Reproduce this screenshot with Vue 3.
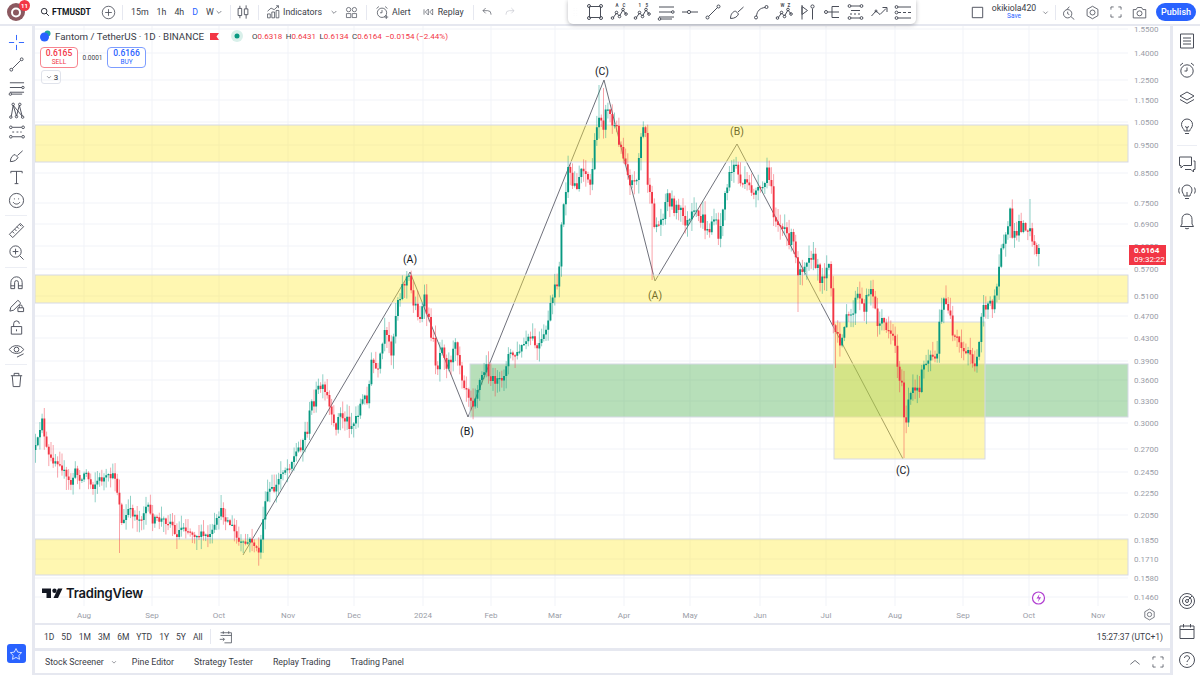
<script setup>
import { h } from 'vue'

const c = (x, y, r) => `M${x - r} ${y}a${r} ${r} 0 1 0 ${2 * r} 0a${r} ${r} 0 1 0 ${-2 * r} 0`
const wave = 'M3 15l3.5-5 3 3 3.5-6 3 4' + c(2.5, 15, 1.3) + c(6.5, 9.5, 1.3) + c(9.5, 13.5, 1.3) + c(13, 6.5, 1.3) + c(16, 11, 1.3)

const I = {
  search: c(7.5, 7.5, 5) + 'M11 11l5 5',
  plus: c(9, 9, 7.5) + 'M9 5v8M5 9h8',
  chev: 'M5.5 7.5L9 11l3.5-3.5',
  candles: 'M5.5 2v3M5.5 13v3M3.5 5h4v8h-4zM12.5 1.5v4M12.5 12v4.5M10.5 5.5h4v6.5h-4z',
  indicators: 'M2 16.5v-5h3.5v5zM7.5 16.5V9H11v7.5zM13 16.5V7h3.5v9.5zM2 8l4.5-4 4 2 5.5-5M13 1h3v3',
  templates: c(5, 5, 3) + c(13, 5, 3) + 'M2 10.5h6v5.5H2zM10 10.5h6v5.5h-6z',
  alert: c(9, 10, 6) + 'M9 6.5V10H6.5M2 4.5L5 2M16 4.5L13 2M12 15.5h5M14.5 13v5',
  replay: 'M8 4.5L3.5 9 8 13.5zM14.5 4.5L10 9l4.5 4.5zM1.5 5v8',
  undo: 'M7 3L3 7l4 4M3 7h7a5 5 0 0 1 5 5v1',
  redo: 'M11 3l4 4-4 4M15 7H8a5 5 0 0 0-5 5v1',
  rect: 'M3.5 3.5h11v11h-11z' + c(3, 3, 1.5) + c(15, 3, 1.5) + c(3, 15, 1.5) + c(15, 15, 1.5),
  wave,
  lines: 'M2 4h15M2 9h13M2 14h15' + c(15.8, 9, 1.3) + c(2.5, 16, 1.3) + 'M4 16h11',
  hline: 'M1 9h5M10 9h7' + c(8, 9, 1.6),
  trend: 'M4.5 13.5l9-9' + c(3.5, 14.5, 1.5) + c(14.5, 3.5, 1.5),
  brush: 'M2.5 15.5c0-4.5 2.5-7 5-7.5l3 3c-1 2.5-3.5 4.5-8 4.5zM10 9l5.5-5',
  curve: 'M4.5 13C5 8 8 5 13 4.5' + c(4, 14.5, 1.5) + c(14.5, 4, 1.5),
  flagpin: 'M3 2v14.5M3 3.5l5.5 4L3 11.5zM13.5 5.5v11' + c(13.5, 3.5, 1.6),
  fork: 'M4.5 9H9M9 3.5v11M9 3.5h7M9 9h7M9 14.5h7' + c(3, 9, 1.5),
  rows: 'M5 3h9M5 15h9M5 7.5h9M4 11h2M8 11h2M12 11h2' + c(3.5, 3, 1.4) + c(15.5, 3, 1.4) + c(3.5, 15, 1.4) + c(15.5, 15, 1.4),
  zig: 'M1.5 13l4.5-5 4 3.5 6-6M12.5 4.5H17V9' + c(6, 8, 1) ,
  rows2: 'M4 4h13M4 15h13M4 9.5h3M9 9.5h3M14 9.5h3' + c(2.5, 4, 1.4) + c(2.5, 9.5, 1.4) + c(2.5, 15, 1.4),
  drag: 'M6 3.5v.1M6 7v.1M6 10.5v.1M6 14v.1M10 3.5v.1M10 7v.1M10 10.5v.1M10 14v.1',
  box: 'M3.5 3.5h11v11h-11z',
  aSearch: c(8, 10.5, 5) + 'M12 14l4 3.5M7 5.5L10 2M8 8v2.5l2 1',
  hex: 'M9 1.5l6.5 3.7v7.6L9 16.5l-6.5-3.7V5.2z' + c(9, 9, 3),
  full: 'M2.5 6V2.5H6M12 2.5h3.5V6M15.5 12v3.5H12M6 15.5H2.5V12',
  camera: 'M1.5 5.5h3.5L6.5 3h5L13 5.5h3.5v10h-15z' + c(9, 10, 3),
  cross: 'M9 1v5.5M9 11.5V17M1 9h5.5M11.5 9H17',
  xabcd: 'M3.5 15L5.5 3.5 9 15l3-11.5 3 11.5L5.5 3.5' + c(3, 16, 1.3) + c(5.5, 2.5, 1.3) + c(9, 15.5, 1.3) + c(12.5, 2.5, 1.3) + c(15.5, 16, 1.3),
  para: 'M4.5 3.5h10M4.5 8.5h2M9 8.5h2M13 8.5h1.5M4.5 13.5h10' + c(3, 3.5, 1.4) + c(16, 3.5, 1.4) + c(3, 13.5, 1.4) + c(16, 13.5, 1.4),
  text: 'M3 4.5V2.5h12v2M9 2.5v13M7 15.5h4',
  smile: c(9, 9, 7.5) + 'M5.5 10.8c1.5 2.6 5.5 2.6 7 0M6.8 6.8v1M11.2 6.8v1',
  ruler: 'M1.5 13L13 1.5 16.5 5 5 16.5zM4.5 10l2 2M7 7.5l2 2M9.5 5l2 2M12 2.5l2 2',
  zoom: c(8, 8, 6) + 'M12.5 12.5L16.5 16.5M5 8h6M8 5v6',
  magnet: 'M3 9a6 6 0 0 1 12 0v6.5h-4V9a2 2 0 0 0-4 0v6.5H3zM3 12.5h4M11 12.5h4',
  plock: 'M2 16l1-4 7.5-7.5 3 3L6 15zM10.5 12.5h6v4h-6zM12 12.5V11a1.5 1.5 0 0 1 3 0v1.5',
  lock: 'M3.5 8h11v8h-11zM6 8V5a3 3 0 0 1 6 0M9 11v2',
  eye: 'M1.5 8c3-5.5 12-5.5 15 0-3 5.5-12 5.5-15 0z' + c(9, 8, 2.5) + 'M9.5 16l7-3.5',
  trash: 'M3 5h12M6.5 5V2.5h5V5M4.5 5l1 11.5h7l1-11.5',
  list: 'M2.5 2h13v14h-13zM5 6h8M5 9h8M5 12h8',
  alarm: c(9, 10, 6.2) + 'M9 6.5V10H6.5M2 4.5L5 2M16 4.5L13 2',
  layers: 'M9 3l7 4-7 4-7-4zM2 10.5l7 4 7-4',
  bulb: 'M6.3 13c0-2-2.8-3-2.8-6.5a5.5 5.5 0 0 1 11 0c0 3.5-2.8 4.5-2.8 6.5zM7 15.5h4M9 9v4M7 8.5l2 1 2-1',
  chat: 'M1.5 2h12v8.5H5.5L3 13v-2.5H1.5zM15.5 6h1.5v8.5h-1.5V17L13 14.5H7',
  signal: 'M6 13c0-2-2-3-2-6a5 5 0 0 1 10 0c0 3-2 4-2 6zM7 15.5h4M9 9v4M1.5 4.5c-1 2-1 4 0 6M16.5 4.5c1 2 1 4 0 6',
  bell: 'M9 2c3.5 0 5 2.5 5 5.5V12l1.5 2.5h-13L4 12V7.5C4 4.5 5.5 2 9 2zM7 16c.5 1 3.5 1 4 0',
  radar: c(9, 9, 7.5) + c(9, 9, 4.5) + c(9, 9, 1.5) + 'M10 8l4-4',
  cal: 'M2 4h14v12.5H2zM2 7.5h14M5.5 2v3.5M12.5 2v3.5',
  ques: c(9, 9, 7.5) + 'M6.5 7c0-3 5-3 5 0 0 2-2.5 2-2.5 4M9 13v1',
  star: 'M9 2l2.2 4.6 5 .7-3.6 3.5.9 5L9 13.4l-4.5 2.4.9-5-3.6-3.5 5-.7z',
  range: 'M2 3.5h14v13H7M2 7h14M5.5 1.5v3.5M12.5 1.5v3.5M1 12h6M5 10l2 2-2 2',
  up: 'M3 12l6-5 6 5',
}

const Ico = (p) =>
  h('svg', { class: 'ic', viewBox: '0 0 18 18', width: p.s || 14, height: p.s || 14, fill: 'none', stroke: p.col || '#4a4e59', 'stroke-width': p.w || 1 }, [
    h('path', { d: I[p.n] }),
    p.a ? h('text', { x: 5.5, y: 4, 'font-size': 4.5, fill: '#4a4e59', stroke: 'none', 'font-family': 'Roboto, sans-serif', 'font-weight': 700 }, p.a) : null,
    p.b ? h('text', { x: 12.5, y: 4, 'font-size': 4.5, fill: '#4a4e59', stroke: 'none', 'font-family': 'Roboto, sans-serif', 'font-weight': 700 }, p.b) : null,
  ])
Ico.props = ['n', 's', 'col', 'w', 'a', 'b']

const floatIcons = [
  { n: 'rect' }, { n: 'wave', a: 'A', b: 'C' }, { n: 'wave', a: '1', b: '5' }, { n: 'lines' }, { n: 'hline' }, { n: 'trend' },
  { n: 'brush' }, { n: 'curve' }, { n: 'wave', a: 'W', b: 'Z' }, { n: 'flagpin' }, { n: 'fork' }, { n: 'rows' }, { n: 'zig' }, { n: 'rows2' },
]
const leftGroups = [
  ['trend', 'lines', 'xabcd', 'para', 'brush', 'text', 'smile'],
  ['ruler', 'zoom'],
  ['magnet', 'plock', 'lock', 'eye'],
  ['trash'],
]
const rightTop = ['list', 'alarm', 'layers', 'bulb']
const rightMid = ['chat', 'signal', 'bell']
const rightBot = ['radar', 'cal', 'ques']
const tf = ['15m', '1h', '4h']
const rangeBtns = ['1D', '5D', '1M', '3M', '6M', 'YTD', '1Y', '5Y', 'All']
const panels = ['Pine Editor', 'Strategy Tester', 'Replay Trading', 'Trading Panel']

const prices = [
  ['1.5500', 29], ['1.4000', 53], ['1.2500', 80], ['1.1500', 100], ['1.0500', 122], ['0.9500', 145], ['0.8500', 173], ['0.7500', 203],
  ['0.6900', 224], ['0.6300', 246], ['0.5700', 269], ['0.5100', 296], ['0.4700', 316], ['0.4300', 338], ['0.3900', 361], ['0.3600', 380],
  ['0.3300', 401], ['0.3000', 423], ['0.2700', 449], ['0.2450', 472], ['0.2250', 493], ['0.2050', 515], ['0.1850', 540], ['0.1710', 559],
  ['0.1580', 578], ['0.1460', 597],
]
const times = [['Aug', 84], ['Sep', 152], ['Oct', 219], ['Nov', 288], ['Dec', 354], ['2024', 423], ['Feb', 491], ['Mar', 555], ['Apr', 624], ['May', 690], ['Jun', 760], ['Jul', 826], ['Aug', 895], ['Sep', 963], ['Oct', 1029], ['Nov', 1098]]
const labels = [['(A)', 410, 259], ['(B)', 467, 431], ['(C)', 602, 71], ['(A)', 655, 295], ['(B)', 737, 131], ['(C)', 903, 470]]
const bands = [[125, 162], [275, 303], [539, 575]]

const KP = [35,450,38,440,42,415,45,445,50,460,55,460,60,462,67,480,72,485,74,470,82,480,85,470,92,487,98,480,107,478,115,476,117,490,120,505,122,527,128,510,135,515,140,520,147,505,152,520,163,520,172,522,175,537,183,525,190,532,198,535,210,537,215,527,220,510,227,520,233,528,238,542,243,545,252,540,257,552,260,550,263,518,268,490,275,490,282,470,288,468,295,455,300,445,307,430,312,403,320,387,328,400,333,430,340,415,353,425,360,405,368,395,372,360,378,375,384,335,392,350,397,300,403,285,408,275,413,300,420,317,425,300,428,320,432,335,437,370,442,340,447,365,457,345,462,375,470,395,473,400,478,385,487,365,490,380,495,380,502,383,508,355,517,355,523,345,532,337,537,350,545,335,550,310,558,280,562,220,568,173,573,187,577,183,583,163,590,187,597,127,600,107,603,125,608,105,612,125,617,130,622,150,627,165,630,180,635,185,638,165,642,127,646,135,648,190,652,210,655,225,660,225,667,195,673,205,682,215,688,225,693,215,703,220,708,235,713,215,720,240,723,200,730,175,735,160,738,175,743,185,753,190,760,195,767,175,772,185,773,210,778,222,785,235,793,240,797,270,803,265,810,250,817,270,823,282,826,262,830,265,833,330,840,345,843,325,850,318,858,295,863,312,870,282,875,310,878,322,887,325,893,335,898,365,902,390,905,430,908,405,913,390,918,395,922,370,927,355,937,355,940,320,945,295,950,315,953,345,958,340,963,355,970,350,975,372,978,350,982,305,988,305,993,310,998,270,1002,238,1007,240,1010,215,1013,240,1020,225,1025,225,1030,225,1035,250,1038,247]
const spikes = { 120: 553, 797: 312, 835: 368, 904: 458, 653: 280, 1030: 199, 44: 408, 599: 85, 604: 88 }

function buildCandles() {
  let seed = 12345
  const rnd = () => (seed = (seed * 16807) % 2147483647) / 2147483647
  const interp = (x) => {
    for (let i = 0; i < KP.length - 2; i += 2) {
      if (x <= KP[i + 2]) return KP[i + 1] + ((x - KP[i]) / (KP[i + 2] - KP[i])) * (KP[i + 3] - KP[i + 1])
    }
    return KP[KP.length - 1]
  }
  const out = { gw: '', rw: '', gb: '', rb: '' }
  let prev = interp(35)
  for (let x = 35.5; x <= 1039; x += 2.21) {
    const close = interp(x) + (rnd() - 0.5) * (x > 550 || (x > 300 && x < 480) ? 15 : 8)
    const open = prev
    const top = Math.min(open, close)
    const bot = Math.max(open, close)
    let hi = top - rnd() * 13 - 0.5
    let lo = bot + rnd() * 13 + 0.5
    for (const k in spikes) {
      if (Math.abs(x - k) < 1.2) {
        if (spikes[k] > bot) lo = spikes[k]
        else hi = spikes[k]
      }
    }
    const up = close < open
    const X = x.toFixed(1)
    const w = `M${X} ${hi.toFixed(1)}V${lo.toFixed(1)}`
    const H = Math.max(bot - top, 1.2)
    const b = `M${(x - 0.95).toFixed(1)} ${top.toFixed(1)}h1.9v${H.toFixed(1)}h-1.9z`
    if (up) { out.gw += w; out.gb += b } else { out.rw += w; out.rb += b }
    prev = close
  }
  return out
}
const candles = buildCandles()
const waveLine = '243,555 410,272 468,417 604,80 655,281 737,144 903,459'
</script>

<template>
  <div class="app">
    <header class="top">
      <div class="avatar">
        <svg width="18" height="18" viewBox="0 0 18 18"><circle cx="9" cy="9" r="9" fill="#8b5960" /><circle cx="9" cy="9.500" r="4" fill="none" stroke="#fff" stroke-width="2" /></svg>
        <span class="badge">11</span>
      </div>
      <Ico n="search" :s="10" class="m-search" :w="1.6" col="#131722" />
      <b class="sym">FTMUSDT</b>
      <Ico n="plus" :s="15" class="m-plus" />
      <i class="vs v1"></i>
      <div class="tfs">
        <span v-for="t in tf" :key="t">{{ t }}</span>
        <span class="blue">D</span>
        <span>W</span>
      </div>
      <Ico n="chev" :s="12" class="m-chev" />
      <i class="vs v2"></i>
      <Ico n="candles" :s="16" class="m-cand" />
      <i class="vs v3"></i>
      <Ico n="indicators" :s="14" class="m-ind" />
      <span class="lbl">Indicators</span>
      <Ico n="chev" :s="12" class="m-chev2" />
      <Ico n="templates" :s="13" class="m-tpl" />
      <i class="vs v4"></i>
      <Ico n="alert" :s="14" class="m-alert" />
      <span class="lbl">Alert</span>
      <Ico n="replay" :s="12" class="m-replay" />
      <span class="lbl">Replay</span>
      <i class="vs v5"></i>
      <Ico n="undo" :s="12" class="m-undo" />
      <Ico n="redo" :s="12" class="m-redo" col="#c4c6ce" />

      <div class="float">
        <Ico n="drag" :s="12" class="drag" col="#b2b5be" :w="1.4" />
        <span v-for="(f, i) in floatIcons" :key="i" class="fi"><Ico :n="f.n" :a="f.a" :b="f.b" :s="18" /></span>
      </div>

      <div class="topright">
        <Ico n="box" :s="17" />
        <div class="user"><span>okikiola420</span><small>Save</small></div>
        <Ico n="chev" :s="11" />
        <i class="vs v6"></i>
        <Ico n="aSearch" :s="15" class="m-a" />
        <Ico n="hex" :s="15" class="m-b" />
        <Ico n="full" :s="14" class="m-b" />
        <Ico n="camera" :s="15" class="m-b" />
        <button class="publish">Publish</button>
      </div>
    </header>

    <div class="main">
      <aside class="left">
        <span class="li"><Ico n="cross" :s="17" col="#2962ff" /></span>
        <template v-for="(g, gi) in leftGroups" :key="gi">
          <span v-for="n in g" :key="n" class="li"><Ico :n="n" :s="17" /></span>
          <i v-if="gi < 3" class="hs"></i>
        </template>
        <button class="star"><Ico n="star" :s="14" col="#fff" /></button>
      </aside>

      <section class="center">
        <div class="chart">
          <svg class="canvas" viewBox="35 26 1135 597" width="1135" height="597">
            <g stroke="#f1f3f8" stroke-width="1">
              <path v-for="p in prices" :key="p[0]" :d="`M35 ${p[1]}H1128`" />
              <path v-for="t in times" :key="t[0] + t[1]" :d="`M${t[1]} 26V606`" />
            </g>
            <polyline :points="waveLine" fill="none" stroke="#5d606b" stroke-width="0.9" />
            <text v-for="(l, i) in labels" :key="i" :x="l[1]" :y="l[2] + 4" class="wlabel">{{ l[0] }}</text>

            <rect x="470" y="364" width="658" height="53" fill="#4caf50" fill-opacity=".4" stroke="#d6d9e6" />
            <rect v-for="b in bands" :key="b[0]" x="35" :y="b[0]" width="1093" :height="b[1] - b[0]" fill="#ffeb3b" fill-opacity=".4" stroke="#d6d9e6" />
            <rect x="834" y="322" width="151" height="137" fill="#ffeb3b" fill-opacity=".4" stroke="#d6d9e6" />

            <path :d="candles.gw" stroke="#089981" stroke-opacity=".45" fill="none" />
            <path :d="candles.rw" stroke="#f23645" stroke-opacity=".45" fill="none" />
            <path :d="candles.gb" fill="#089981" />
            <path :d="candles.rb" fill="#f23645" />

            <circle cx="1038.5" cy="598" r="6" fill="#fff" stroke="#b13fd1" stroke-width="1.2" />
            <path d="M1039.5 594l-3 4.5h2.4l-1 3.5 3.2-4.8h-2.4z" fill="#b13fd1" />

            <text v-for="p in prices" :key="'y' + p[0]" x="1134" :y="p[1] + 3" class="axis">{{ p[0] }}</text>
            <text v-for="t in times" :key="'x' + t[0] + t[1]" :x="t[1]" y="618" class="axis mid">{{ t[0] }}</text>

            <rect x="1129" y="245" width="37" height="20" fill="#f23645" />
            <text x="1134" y="253" class="tag bold">0.6164</text>
            <text x="1134" y="262" class="tag">09:32:22</text>

            <path d="M42 588.500h9v9.500h-4.500v-5H42zM58 588.500h4.500L58 598h-4.500z" fill="#131722" />
            <circle cx="54.500" cy="590.700" r="2.200" fill="#131722" />
            <text x="66" y="598" class="tv">TradingView</text>
          </svg>
          <Ico n="hex" :s="13" class="gear" />

          <div class="legend">
            <div class="title">
              <svg class="coin" width="11" height="12" viewBox="0 0 11 12"><circle cx="7.500" cy="3.500" r="3" fill="#1aa6a0" /><circle cx="4.500" cy="7" r="4.500" fill="#2962ff" /></svg>
              <span>Fantom / TetherUS · 1D · BINANCE</span>
              <svg class="flag" width="9" height="9" viewBox="0 0 9 9"><path d="M0 1h9L6.500 4.500 9 8H0z" fill="#f23645" /></svg>
              <svg class="dot" width="12" height="12" viewBox="0 0 12 12"><circle cx="6" cy="6" r="6" fill="#d9f0ea" /><circle cx="6" cy="6" r="2.500" fill="#089981" /></svg>
              <div class="ohlc">
                <span>O<em>0.6318</em></span><span>H<em>0.6431</em></span><span>L<em>0.6134</em></span><span>C<em>0.6164</em></span><em>−0.0154 (−2.44%)</em>
              </div>
            </div>
            <div class="trade">
              <div class="tbtn sell"><b>0.6165</b><small>SELL</small></div>
              <span class="spread">0.0001</span>
              <div class="tbtn buy"><b>0.6166</b><small>BUY</small></div>
            </div>
            <div class="count"><Ico n="chev" :s="10" /><span>3</span></div>
          </div>
        </div>

        <div class="rangebar">
          <span v-for="r in rangeBtns" :key="r">{{ r }}</span>
          <i class="vs v7"></i>
          <Ico n="range" :s="14" class="m-rng" />
          <span class="clock">15:27:37 (UTC+1)</span>
        </div>

        <div class="panel">
          <span>Stock Screener</span>
          <Ico n="chev" :s="10" class="m-pc" />
          <span v-for="p in panels" :key="p" class="pn">{{ p }}</span>
          <span class="pr">
            <Ico n="up" :s="14" />
            <Ico n="full" :s="14" />
          </span>
        </div>
      </section>

      <aside class="right">
        <span v-for="n in rightTop" :key="n" class="ri"><Ico :n="n" :s="18" /></span>
        <i class="rs"></i>
        <span v-for="n in rightMid" :key="n" class="ri"><Ico :n="n" :s="18" /></span>
        <div class="rbot">
          <span v-for="n in rightBot" :key="n" class="ri"><Ico :n="n" :s="18" /></span>
        </div>
      </aside>
    </div>
  </div>
</template>

<style scoped>
.app { width: 1200px; height: 675px; display: flex; flex-direction: column; overflow: hidden; background: #e6e8f0; font-family: Roboto, "Liberation Sans", sans-serif; color: #2e3039; }
.ic { flex: none; display: block; }
.vs { flex: none; width: 1px; height: 15px; background: #e6e8f0; display: block; }

.top { position: relative; flex: none; height: 24px; margin-bottom: 2px; background: #fff; display: flex; align-items: center; font-size: 8.800px; }
.avatar { position: relative; margin-left: 7px; width: 18px; height: 18px; flex: none; }
.badge { position: absolute; left: 12px; top: -3px; width: 11px; height: 11px; border-radius: 50%; background: #f23645; color: #fff; font-size: 6px; font-weight: 700; line-height: 11px; text-align: center; }
.m-search { margin-left: 15px; }
.sym { margin-left: 2px; width: 39px; font-size: 8.500px; color: #131722; white-space: nowrap; }
.m-plus { margin-left: 10px; }
.v1 { margin-left: 6px; }
.tfs { margin-left: 8px; display: flex; width: 80px; gap: 8px; font-weight: 400; color: #3a3d47; }
.blue { color: #2962ff; }
.m-chev { margin-left: 2px; }
.v2 { margin-left: 5px; }
.m-cand { margin-left: 4px; }
.v3 { margin-left: 7px; }
.m-ind { margin-left: 7px; }
.lbl { margin-left: 3px; font-weight: 400; color: #3a3d47; white-space: nowrap; }
.m-chev2 { margin-left: 6px; }
.m-tpl { margin-left: 5px; }
.v4 { margin-left: 8px; }
.m-alert { margin-left: 8px; }
.m-replay { margin-left: 12px; }
.v5 { margin-left: 9px; }
.m-undo { margin-left: 7px; }
.m-redo { margin-left: 11px; }

.float { position: absolute; left: 568px; top: 0; width: 348px; height: 24px; display: flex; align-items: center; background: #fff; border-radius: 0 0 5px 5px; box-shadow: 0 1px 4px rgba(19, 23, 34, .3); z-index: 3; }
.drag { margin-left: 2px; margin-right: 1px; }
.fi { flex: none; width: 23.700px; display: flex; justify-content: center; }

.topright { position: absolute; right: 4px; top: 0; height: 24px; display: flex; align-items: center; }
.user { width: 44px; margin: 0 4px 0 6px; display: flex; flex-direction: column; align-items: center; line-height: 9px; font-size: 8.700px; font-weight: 400; color: #3a3d47; white-space: nowrap; }
.user small { font-size: 6.500px; color: #2962ff; font-weight: 400; line-height: 7px; }
.v6 { margin-left: 4px; }
.m-a { margin-left: 5px; }
.m-b { margin-left: 9px; }
.publish { margin-left: 9px; width: 40px; height: 18px; border: 0; padding: 0; border-radius: 9px; background: #2962ff; color: #fff; font: 500 9px Roboto, sans-serif; }

.main { flex: 1; min-height: 0; display: flex; gap: 3px; }
.left { flex: none; width: 32px; background: #fff; display: flex; flex-direction: column; align-items: center; padding-top: 5px; box-sizing: border-box; }
.li { flex: none; height: 22.600px; display: flex; align-items: center; }
.hs { flex: none; width: 22px; height: 1px; background: #eceef4; margin: 3px 0; display: block; }
.star { margin-top: auto; margin-bottom: 12px; width: 19px; height: 19px; border: 0; padding: 0; border-radius: 3px; background: #2962ff; display: flex; align-items: center; justify-content: center; }

.center { flex: 1; min-width: 0; display: flex; flex-direction: column; }
.chart { position: relative; flex: none; height: 597px; background: #fff; overflow: hidden; }
.canvas { display: block; }
.axis { font: 8px Roboto, sans-serif; fill: #9a9da7; }
.mid { text-anchor: middle; }
.wlabel { font: 10.500px Roboto, sans-serif; fill: #131722; text-anchor: middle; }
.tag { font: 8px Roboto, sans-serif; fill: #fff; }
.bold { font-weight: 700; }
.tv { font: 600 13px Inter, Roboto, sans-serif; fill: #131722; letter-spacing: -.2px; }
.gear { position: absolute; left: 1108px; top: 582px; }

.legend { position: absolute; left: 5px; top: 3px; }
.title { display: flex; align-items: center; height: 14px; font-size: 9.750px; font-weight: 400; color: #3a3d47; white-space: nowrap; }
.coin { margin-right: 4px; }
.flag { margin-left: 6px; }
.dot { margin-left: 12px; }
.ohlc { margin-left: 9px; display: flex; gap: 3.500px; font-size: 8px; }
.ohlc em { color: #f23645; font-style: normal; }
.trade { display: flex; align-items: center; margin-top: 4px; }
.tbtn { width: 38px; height: 21px; box-sizing: border-box; border-radius: 4px; border: 1px solid; display: flex; flex-direction: column; align-items: center; justify-content: center; font-size: 8.500px; line-height: 9px; background: #fff; }
.tbtn b { font-weight: 500; }
.tbtn small { font-size: 6.500px; line-height: 8px; }
.sell { color: #f23645; border-color: #f7858f; }
.buy { color: #2962ff; border-color: #7d9dff; width: 39px; }
.spread { width: 29px; text-align: center; font-size: 6.500px; color: #3a3d47; }
.count { margin: 2px 0 0 1px; width: 20px; height: 14px; box-sizing: border-box; border: 1px solid #e0e3eb; border-radius: 3px; display: flex; align-items: center; justify-content: center; font-size: 8px; }

.rangebar { flex: none; height: 23px; margin-top: 2px; background: #fff; display: flex; align-items: center; gap: 7px; padding: 0 7px 0 9px; font-size: 8.500px; font-weight: 400; color: #3a3d47; }
.v7 { margin: 0; }
.m-rng { margin-left: 1px; }
.clock { margin-left: auto; }
.panel { flex: none; height: 22px; margin: 3px 0 2px; background: #fff; display: flex; align-items: center; padding-left: 10px; font-size: 8.800px; color: #3a3d47; position: relative; }
.m-pc { margin: 0 0 0 5px; }
.pn { margin-left: 20px; }
.panel .pn:nth-of-type(2) { margin-left: 13px; }
.pr { margin-left: auto; margin-right: 5px; display: flex; gap: 9px; }

.right { flex: none; width: 27px; background: #fff; display: flex; flex-direction: column; align-items: center; }
.ri { flex: none; height: 28.700px; display: flex; align-items: center; }
.right > .ri:first-child { margin-top: .6px; }
.rs { flex: none; width: 20px; height: 1px; background: #eceef4; margin: 4px 0 3px; display: block; }
.rbot { margin-top: auto; display: flex; flex-direction: column; }
.rbot .ri { height: 29.500px; }
</style>
